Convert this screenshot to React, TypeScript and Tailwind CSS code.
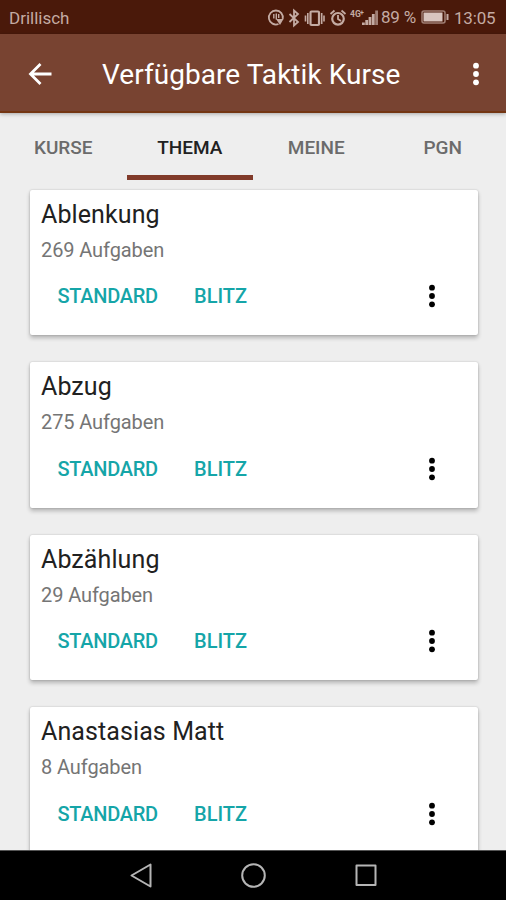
import React from 'react';

const courses = [
  { title: 'Ablenkung', count: '269 Aufgaben' },
  { title: 'Abzug', count: '275 Aufgaben' },
  { title: 'Abzählung', count: '29 Aufgaben' },
  { title: 'Anastasias Matt', count: '8 Aufgaben' },
];

function Dots({ className }: { className: string }) {
  return (
    <svg width="8" height="26" viewBox="0 0 8 26" fill="currentColor" className={className}>
      <circle cx="4" cy="4.7" r="2.9" />
      <circle cx="4" cy="13" r="2.9" />
      <circle cx="4" cy="21.3" r="2.9" />
    </svg>
  );
}

function StatusIcons() {
  return (
    <svg width="114" height="24" viewBox="267 5 114 24" fill="none" stroke="currentColor" strokeWidth="1.8" className="shrink-0">
      {/* notification */}
      <path d="M278.500 24a7 7 0 1 1 4.200-5" />
      <path d="M273.800 14v4.500M276.300 13.500v6M278.700 14v4" strokeWidth="1.4" />
      <path d="M276 19h7.500l-3.500 6z" fill="currentColor" stroke="none" />
      {/* bluetooth */}
      <path d="M289.500 14l8.500 8-4 3.500V10.500l4 3.500-8.500 8" strokeWidth="1.8" />
      {/* vibrate */}
      <rect x="310.500" y="11.500" width="8.500" height="13.500" rx="1" strokeWidth="2.200" />
      <path d="M307.800 13v11M305.500 15.500v6M321.700 13v11M324 15.500v6" strokeWidth="1.6" />
      {/* alarm */}
      <circle cx="338" cy="18.800" r="5.800" strokeWidth="2.200" />
      <path d="M338 15v4l3 2M330.500 14l4-3.500M345.500 14l-4-3.500" strokeWidth="1.800" />
      {/* signal */}
      <g fill="currentColor" stroke="none">
        <rect x="362" y="22.500" width="2.800" height="2.500" />
        <rect x="365.300" y="20" width="2.800" height="5" />
        <rect x="368.600" y="17" width="2.800" height="8" />
        <rect x="371.900" y="14" width="2.800" height="11" />
        <rect x="375.200" y="10.500" width="2.800" height="14.500" opacity=".7" />
        <text x="350" y="16.500" fontSize="8.500" fontWeight="700" fontFamily="Roboto, sans-serif">4G</text>
        <text x="360" y="15" fontSize="7" fontWeight="700" fontFamily="Roboto, sans-serif">+</text>
      </g>
    </svg>
  );
}

function CourseCard({ title, count }: { title: string; count: string }) {
  return (
    <article className="h-[145.500px] shrink-0 rounded-[2px] bg-white pl-[11px] shadow-[0_0_2px_rgba(0,0,0,0.22),0_3px_4px_rgba(0,0,0,0.24)]">
      <h2 className="h-[45px] pt-[9px] text-[25px] leading-[32px] tracking-[0.1px] text-[#212121]">{title}</h2>
      <p className="h-[30px] text-[20px] leading-[30px] tracking-[-0.1px] text-[#757575]">{count}</p>
      <div className="flex h-[63px] items-center pl-[16.500px] text-[20px] font-medium text-[#15a5a8]">
        <button className="w-[136.500px] text-left tracking-[-0.3px]">STANDARD</button>
        <button className="w-[234px] text-left">BLITZ</button>
        <Dots className="text-black" />
      </div>
    </article>
  );
}

export default function App() {
  return (
    <div className="flex h-[900px] w-[506px] flex-col overflow-hidden bg-[#eeeeee] font-['Roboto',sans-serif]">
      <div className="flex h-[34px] shrink-0 items-center bg-[#4a190a] pl-[9px] text-[17px] text-[#c4aba3]">
        <span className="w-[258px] pt-[3px]">Drillisch</span>
        <StatusIcons />
        <span className="w-[40px] whitespace-nowrap pt-px tracking-[-0.200px]">89 %</span>
        <svg width="28" height="14" viewBox="0 0 28 14" fill="none" stroke="currentColor" className="shrink-0">
          <rect x="1" y="1" width="23" height="12" rx="2" strokeWidth="1.500" opacity=".7" />
          <rect x="2.500" y="2.500" width="19" height="9" fill="#d8c5bf" stroke="none" />
          <path d="M26.500 4v6" strokeWidth="2" />
        </svg>
        <span className="ml-[5px] pt-[3px] tracking-[-0.200px]">13:05</span>
      </div>
      <header className="z-10 flex h-[79px] shrink-0 items-center border-b-2 border-[#743613] bg-[#784331] pt-[2px] pl-[28px] text-white shadow-[0_1px_4px_rgba(0,0,0,0.3)]">
        <svg width="24" height="24" viewBox="0 0 24 24" fill="none" stroke="currentColor" strokeWidth="2.800">
          <path d="M12.500 2L2.500 12 12.500 22M2.500 12H23.500" />
        </svg>
        <h1 className="ml-[50px] w-[370px] whitespace-nowrap pt-[2px] text-[28px] tracking-[0.050px]">Verfügbare Taktik Kurse</h1>
        <Dots className="text-white" />
      </header>
      <nav className="grid h-[67px] shrink-0 grid-cols-4 text-center text-[19px] font-medium text-[#6b6b6b]">
        <span className="h-[67px] pt-[21px]">KURSE</span>
        <span className="h-[67px] border-b-[5px] border-[#813b2a] pt-[21px] text-[#212121]">THEMA</span>
        <span className="h-[67px] pt-[21px]">MEINE</span>
        <span className="h-[67px] pt-[21px]">PGN</span>
      </nav>
      <main className="flex min-h-0 flex-1 flex-col gap-[27px] overflow-hidden pt-[9.500px] pr-[28.500px] pl-[30px]">
        {courses.map((c) => (
          <CourseCard key={c.title} title={c.title} count={c.count} />
        ))}
      </main>
      <footer className="flex h-[50px] shrink-0 border-t border-[#555] bg-black pt-[11px] pl-[126px] text-[#b5b5b5]">
        <svg width="254" height="26" viewBox="126 862 254 26" fill="none" stroke="currentColor" strokeWidth="2" strokeLinejoin="round">
          <path d="M131.500 875.500L150.500 864.500V886.500Z" />
          <circle cx="253.500" cy="875.500" r="11.300" />
          <rect x="356.500" y="865.500" width="19" height="19.500" />
        </svg>
      </footer>
    </div>
  );
}
